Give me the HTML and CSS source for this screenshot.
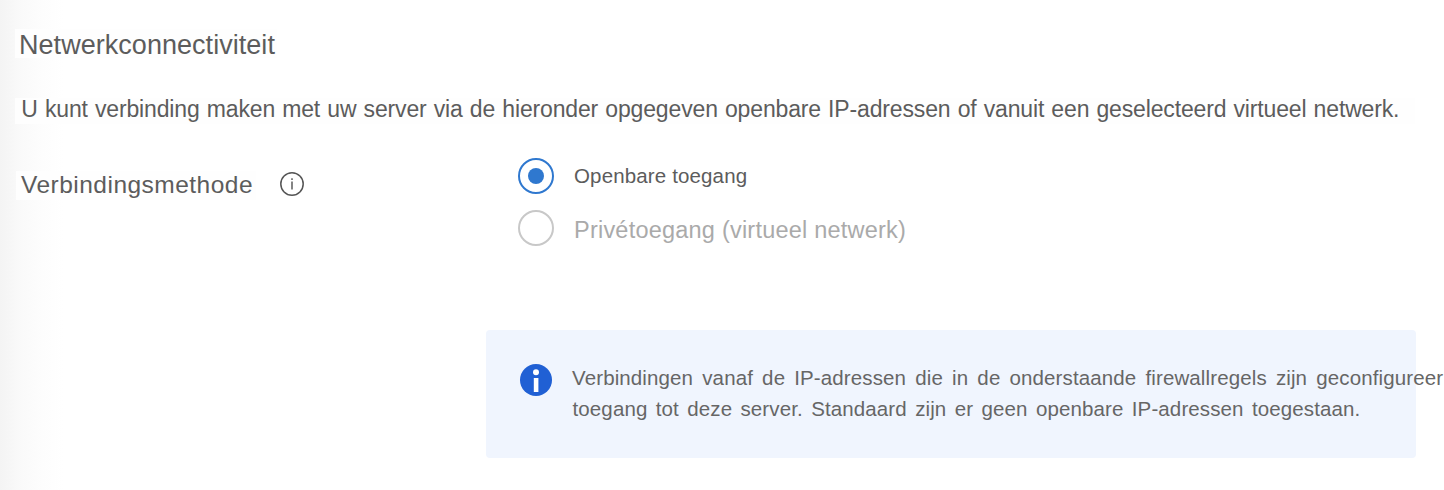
FILE: index.html
```html
<!DOCTYPE html>
<html lang="nl"><head><meta charset="utf-8"><title>Netwerkconnectiviteit</title><link rel="stylesheet" href="styles.css"></head>
<body>
<main class="panel">
<h1 class="title">Netwerkconnectiviteit</h1>
<p class="intro">U kunt verbinding maken met uw server via de hieronder opgegeven openbare IP-adressen of vanuit een geselecteerd virtueel netwerk.</p>
<div class="method">
<div class="label"><span class="label-text">Verbindingsmethode</span>
<svg class="hint" viewBox="0 0 24 24"><circle cx="12" cy="12" r="11.2" fill="none" stroke="#555" stroke-width="1.5"/><path d="M12 9.5v8M12 6.2v1.8" stroke="#666" stroke-width="1.6"/></svg></div>
<div class="options">
<label class="option"><svg class="radio" viewBox="0 0 36 36"><circle cx="18" cy="18" r="17" fill="#fff" stroke="#2f78cf" stroke-width="2"/><circle cx="18" cy="18" r="8" fill="#2f78cf"/></svg><span class="option-text">Openbare toegang</span></label>
<label class="option disabled"><svg class="radio" viewBox="0 0 36 36"><circle cx="18" cy="18" r="17" fill="#fff" stroke="#c8c8c8" stroke-width="2"/></svg><span class="option-text">Privétoegang (virtueel netwerk)</span></label>
</div></div>
<aside class="notice"><svg class="info" viewBox="0 0 32 32"><circle cx="16" cy="16" r="16" fill="#2060d4"/><circle cx="16" cy="8.3" r="3" fill="#fff"/><path d="M13.8 14h4.6v14h-4.6z" fill="#fff"/></svg>
<p class="notice-text"><span class="line first">Verbindingen vanaf de IP-adressen die in de onderstaande firewallregels zijn geconfigureer</span><span class="line second">toegang tot deze server. Standaard zijn er geen openbare IP-adressen toegestaan.</span></p></aside>
</main></body></html>
```
FILE: styles.css
```css
* { box-sizing: border-box; }
body { margin: 0; background: #fff; color: #5c5c5c; font-family: "Liberation Sans", Arial, sans-serif; overflow: hidden; }
.panel { height: 490px; padding: 29px 0 0 15px; background: linear-gradient(90deg, #f4f4f4 0, #fafafa 22px, #fdfdfd 42px, #fff 64px); }
.title { width: 262px; height: 29px; margin: 0; padding-left: 4px; background: #fefefe; font-size: 27px; font-weight: 400; line-height: 33px; letter-spacing: .04px; white-space: nowrap; }
.intro { width: 1400px; height: 26px; margin: 40px 0 0; padding-left: 6.3px; background: #fefefe; font-size: 23px; line-height: 23px; letter-spacing: -.15px; word-spacing: .93px; white-space: nowrap; }
.method { display: flex; margin-top: 34px; }
.label { display: flex; width: 503px; height: 30px; margin: 13px 0 0; font-size: 24.5px; line-height: 28px; letter-spacing: .48px; }
.label-text { width: 240px; height: 29px; margin: 0 24px 0 1px; padding-left: 5px; background: #fefefe; }
.hint { width: 24px; height: 24px; margin-top: 1px; }
.options { display: flex; flex-direction: column; gap: 16px; }
.option { display: flex; gap: 20px; height: 36px; font-size: 20.5px; line-height: 36px; letter-spacing: .14px; white-space: nowrap; }
.radio { width: 36px; height: 36px; }
.disabled { color: #aaa; font-size: 23.5px; line-height: 40px; letter-spacing: .22px; }
.notice { display: flex; gap: 20px; width: 930px; height: 128px; margin: 84px 0 0 471px; padding: 32px 0 0 34px; border-radius: 4px; background: #f0f5fe; color: #666; }
.info { flex: none; width: 32px; height: 32px; margin-top: 2px; }
.notice-text { margin: 0; font-size: 20.5px; line-height: 31px; letter-spacing: .12px; white-space: nowrap; }
.line { display: block; }
.first { word-spacing: 3.3px; }
.second { padding-left: .5px; word-spacing: 2.5px; }
```
